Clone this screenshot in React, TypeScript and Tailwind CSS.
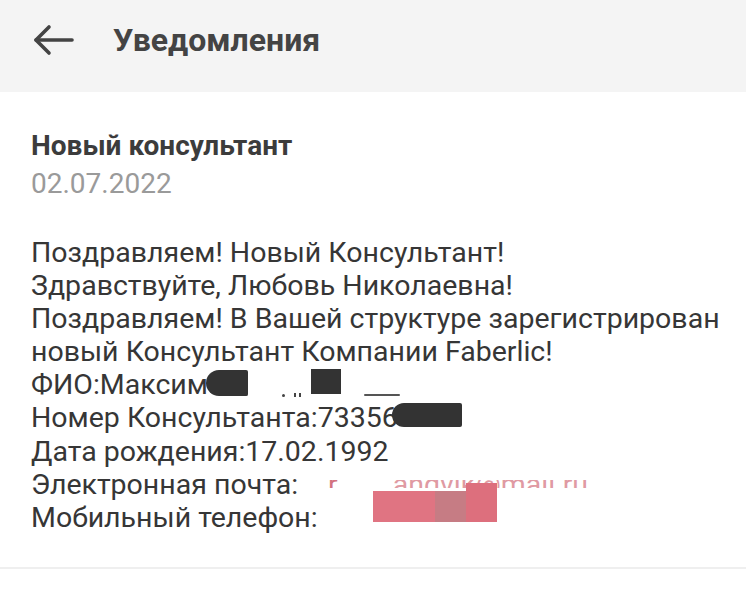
import React from "react";

export default function App() {
  return (
    <div className="w-[746px] h-[600px] bg-white overflow-hidden" style={{ fontFamily: "Roboto, 'Noto Sans', sans-serif" }}>
      <header className="h-[92px] bg-[#f4f4f4] flex items-center gap-[38px] pl-[33px] pb-[12px]">
        <svg width="42" height="32" viewBox="0 0 42 32" fill="none" stroke="#444" strokeWidth="3.6" strokeLinecap="round" strokeLinejoin="round">
          <path d="M3 16 H39" />
          <path d="M16 3 L3 16 L16 29" />
        </svg>
        <h1 className="text-[32px] font-bold text-[#444] leading-none">Уведомления</h1>
      </header>
      <main className="px-[31px] pt-[37px]">
        <div className="text-[28px] font-bold leading-[33px] text-[#3c3c3c]">Новый консультант</div>
        <div className="text-[28px] leading-[33px] text-[#9a9a9a] mt-[5px]">02.07.2022</div>
        <div className="mt-[36px] text-[28.5px] leading-[33.1px] text-[#363636] whitespace-nowrap">
          <div>Поздравляем! Новый Консультант!</div>
          <div>Здравствуйте, Любовь Николаевна!</div>
          <div>Поздравляем! В Вашей структуре зарегистрирован</div>
          <div>новый Консультант Компании Faberlic!</div>
          <div>
            ФИО:Максим
            <span className="inline-block ml-[-2px] w-[42px] h-[26px] bg-[#333] rounded-l-[14px] rounded-r-[2px] align-[-2px]" />
            <span className="inline-block ml-[34px] w-[3px] h-[3px] bg-[#444] rounded-full align-[-3px]" />
            <span className="inline-block ml-[9px] w-[2px] h-[4px] bg-[#444] align-[-3px]" />
            <span className="inline-block ml-[3px] w-[2px] h-[4px] bg-[#444] align-[-3px]" />
            <span className="inline-block ml-[10px] w-[30px] h-[25px] bg-[#333]" />
            <span className="inline-block ml-[23px] w-[36px] h-[2px] bg-[#555] rounded-full align-[-2px]" />
          </div>
          <div>
            Номер Консультанта:73356
            <span className="inline-block ml-[-6px] w-[70px] h-[24px] bg-[#333] rounded-l-[12px] rounded-r-[2px]" />
          </div>
          <div>Дата рождения:17.02.1992</div>
          <div>
            Электронная почта:
            <span className="inline-block ml-[30px] h-[8px] overflow-hidden align-[6px] text-[#e09aa3]">
              <span className="block mt-[-12px]">
                <span className="text-[#d27380]">r</span>
                <span className="inline-block w-[55px]" />
                <span>andvik@mail.ru</span>
              </span>
            </span>
          </div>
          <div>
            Мобильный телефон:
            <span className="relative inline-block ml-[55px] w-[124px] h-0">
              <span className="absolute left-0 bottom-[5px] flex items-end">
                <span className="w-[62px] h-[31px] bg-[#e07482]" />
                <span className="w-[31px] h-[31px] bg-[#c67c84]" />
                <span className="w-[31px] h-[39px] bg-[#dd6f7d]" />
              </span>
            </span>
          </div>
        </div>
      </main>
      <div className="mt-[33px] h-[2px] bg-[#efefef]" />
    </div>
  );
}
